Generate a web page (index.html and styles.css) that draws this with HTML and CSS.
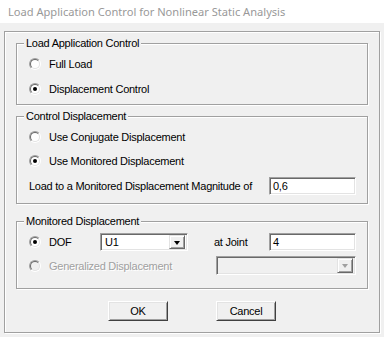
FILE: index.html
```html
<!DOCTYPE html>
<html>
<head>
<meta charset="utf-8">
<link rel="stylesheet" href="styles.css">
</head>
<body>
<div class="titlebar">Load Application Control for Nonlinear Static Analysis</div>
<div class="frame">
  <div class="group g1">
    <span class="legend">Load Application Control</span>
    <div class="row"><span class="radio"><span class="ri"></span></span><span class="lbl">Full Load</span></div>
    <div class="row"><span class="radio checked"><span class="ri"></span></span><span class="lbl">Displacement Control</span></div>
  </div>
  <div class="group g2">
    <span class="legend">Control Displacement</span>
    <div class="row"><span class="radio"><span class="ri"></span></span><span class="lbl">Use Conjugate Displacement</span></div>
    <div class="row"><span class="radio checked"><span class="ri"></span></span><span class="lbl">Use Monitored Displacement</span></div>
    <div class="row field-row"><span class="plain">Load to a Monitored Displacement Magnitude of</span><span class="textbox">0,6</span></div>
  </div>
  <div class="group g3">
    <span class="legend">Monitored Displacement</span>
    <div class="row dof-row">
      <span class="radio checked"><span class="ri"></span></span><span class="lbl dof">DOF</span>
      <span class="combo"><span class="combo-val">U1</span><span class="drop"><span class="tri"></span></span></span>
      <span class="joint-lbl">at Joint</span>
      <span class="textbox joint">4</span>
    </div>
    <div class="row gen-row">
      <span class="radio disabled"><span class="ri"></span></span><span class="lbl disabled-text">Generalized Displacement</span>
      <span class="combo combo-disabled"><span class="combo-val"></span><span class="drop"><span class="tri"></span></span></span>
    </div>
  </div>
  <div class="buttons">
    <span class="btn">OK</span>
    <span class="btn">Cancel</span>
  </div>
</div>
</body>
</html>
```

FILE: styles.css
```css
* { box-sizing: border-box; }
html, body { margin: 0; padding: 0; }
body {
  width: 384px;
  height: 337px;
  background: #f0f0f0;
  font-family: "Liberation Sans", Arial, sans-serif;
  font-size: 11px;
  letter-spacing: -0.25px;
  color: #000;
  overflow: hidden;
}
.titlebar {
  height: 23px;
  background: #fff;
  color: #999;
  font-family: "Noto Sans", "Open Sans", sans-serif;
  font-size: 11.1px;
  letter-spacing: 0;
  line-height: 23px;
  padding-left: 8px;
  white-space: nowrap;
}
.frame {
  margin: 8px 0 0 4px;
  width: 376px;
  height: 302px;
  border: 1px solid #a0a0a0;
  box-shadow: inset 1px 1px 0 #fff, 1px 1px 0 #fff;
  padding: 11px 11px 0 11px;
}
.group {
  position: relative;
  border: 1px solid #a0a0a0;
  box-shadow: inset 1px 1px 0 #fff, 1px 1px 0 #fff;
  padding: 12px 11px 0 12px;
  display: flex;
  flex-direction: column;
}
.legend {
  position: absolute;
  top: -8px;
  left: 7px;
  padding: 0 2px;
  background: #f0f0f0;
  line-height: 14px;
}
.g1 { height: 62px; gap: 9px; }
.g2 { height: 88px; gap: 8px; margin-top: 11px; }
.g3 { height: 68px; margin-top: 17px; padding-top: 11px; gap: 5px; }
.row {
  display: flex;
  align-items: center;
  height: 16px;
  white-space: nowrap;
}
.radio {
  width: 12px;
  height: 12px;
  border-radius: 50%;
  border: 1px solid;
  border-color: #a0a0a0 #fff #fff #a0a0a0;
  flex: none;
  display: flex;
}
.ri {
  width: 10px;
  height: 10px;
  border-radius: 50%;
  border: 1px solid;
  border-color: #696969 #e3e3e3 #e3e3e3 #696969;
  background: #fff;
  display: flex;
  align-items: center;
  justify-content: center;
}
.radio.checked .ri::after {
  content: "";
  width: 4px;
  height: 4px;
  border-radius: 50%;
  background: #000;
}
.radio.disabled .ri { background: #f0f0f0; }
.lbl { margin-left: 8px; }
.disabled-text { color: #a0a0a0; text-shadow: 1px 1px 0 #fff; }
.field-row { height: 18px; margin-top: 0; }
.plain { margin-left: 0; }
.textbox {
  margin-left: auto;
  width: 87px;
  flex: none;
  height: 18px;
  background: #fff;
  border: 1px solid;
  border-color: #a0a0a0 #fff #fff #a0a0a0;
  box-shadow: inset 1px 1px 0 #696969, inset -1px -1px 0 #e3e3e3;
  padding: 0 3px;
  line-height: 16px;
}
.dof-row { height: 18px; }
.dof { width: 51px; flex: none; }
.combo {
  width: 88px;
  flex: none;
  height: 18px;
  background: #fff;
  border: 1px solid;
  border-color: #a0a0a0 #fff #fff #a0a0a0;
  box-shadow: inset 1px 1px 0 #696969, inset -1px -1px 0 #e3e3e3;
  padding: 2px;
  display: flex;
  align-items: center;
}
.combo-val { flex: 1; padding-left: 2px; line-height: 14px; }
.drop {
  width: 16px;
  height: 14px;
  background: #f0f0f0;
  border: 1px solid;
  border-color: #e3e3e3 #696969 #696969 #e3e3e3;
  box-shadow: inset 1px 1px 0 #fff, inset -1px -1px 0 #a0a0a0;
  display: flex;
  align-items: center;
  justify-content: center;
}
.tri {
  width: 0;
  height: 0;
  border-left: 3.5px solid transparent;
  border-right: 3.5px solid transparent;
  border-top: 4px solid #000;
  margin-top: 1px;
}
.joint-lbl { margin-left: 26px; }
.joint { width: 87px; }
.gen-row { height: 19px; }
.combo-disabled {
  margin-left: auto;
  width: 140px;
  height: 19px;
  background: #f0f0f0;
}
.combo-disabled .drop { height: 15px; }
.combo-disabled .tri { border-top-color: #a0a0a0; }
.buttons {
  display: flex;
  justify-content: center;
  gap: 48px;
  margin-top: 12px;
}
.btn {
  width: 60px;
  height: 20px;
  border: 1px solid;
  border-color: #fff #404040 #404040 #fff;
  box-shadow: inset 1px 1px 0 #e3e3e3, inset -1px -1px 0 #a0a0a0;
  background: #f0f0f0;
  display: flex;
  align-items: center;
  justify-content: center;
}
```
